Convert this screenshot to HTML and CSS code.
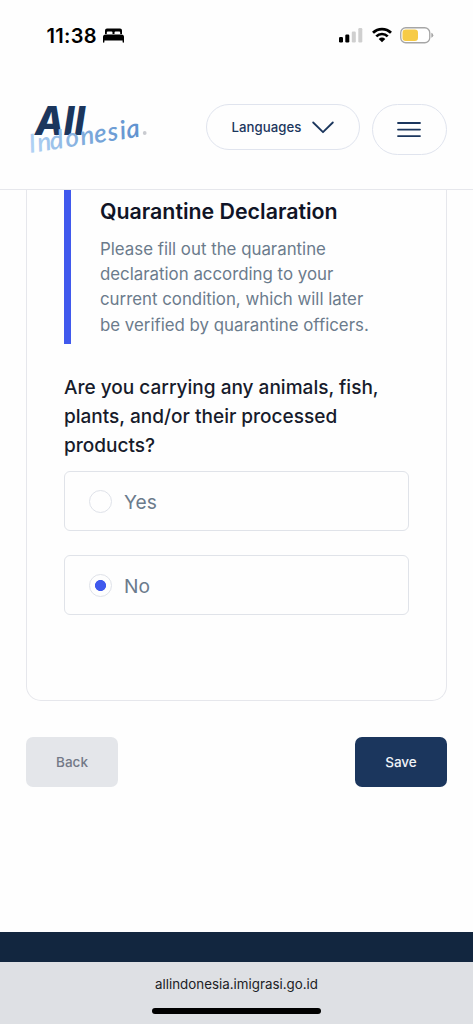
FILE: index.html
```html
<!DOCTYPE html>
<html lang="en">
<head>
<meta charset="utf-8">
<meta name="viewport" content="width=device-width, initial-scale=1">
<title>All Indonesia</title>
<link rel="stylesheet" href="styles.css">
</head>
<body>
<div class="status-bar">
  <div class="clock">
    <span class="time">11:38</span>
    <svg class="bed" width="21" height="15" viewBox="0 0 21 15"><path d="M2 6V2.500Q2 .5 4 .5h13q2 0 2 2V6h-1.800V4.600q0-1-1-1h-3.700q-1 0-1 1V6h-2V4.600q0-1-1-1H4.800q-1 0-1 1V6zM2.500 6.500h16Q21 6.500 21 9v5q0 .7-.7.7t-.7-.7v-1.500H1.400V14q0 .7-.7.7T0 14V9q0-2.500 2.500-2.500z"/></svg>
  </div>
  <div class="indicators">
    <svg width="24" height="16" viewBox="0 0 24 16"><rect x="0" y="10" width="4" height="5.500" rx="1.200"/><rect x="6.300" y="7.500" width="4" height="8" rx="1.200"/><rect x="12.800" y="4.500" width="4" height="11" rx="1.200" fill="#cfcfcf"/><rect x="19.300" y="1" width="4" height="14.500" rx="1.200" fill="#cfcfcf"/></svg>
    <svg width="20" height="16" viewBox="0 0 20 16"><g fill="none" stroke="#000" stroke-width="2.700"><path d="M1 5.800a12.700 12.700 0 0 1 18 0"/><path d="M4.300 9.400a8 8 0 0 1 11.400 0"/></g><path d="M6.700 12q3.300-2.800 6.600 0L10 15.300z"/></svg>
    <svg width="34" height="17" viewBox="0 0 34 17"><rect x=".75" y=".75" width="29" height="15" rx="5" fill="#fff" stroke="#a6a6a6" stroke-width="1.300"/><rect x="2.500" y="2.500" width="15.500" height="11.500" rx="3.200" fill="#f7cb46"/><path d="M31.300 5.800q2 .7 2 2.500t-2 2.500z" fill="#a6a6a6"/></svg>
  </div>
</div>
<header class="header">
  <svg class="logo" width="124" height="56" viewBox="0 0 124 56" role="img" aria-label="All Indonesia">
    <defs><linearGradient id="script-blue" x1="0" x2="1"><stop offset="0" stop-color="#b3d3f5"/><stop offset=".5" stop-color="#7fabdc"/><stop offset="1" stop-color="#5f91cf"/></linearGradient></defs>
    <text class="logo-all" x="9" y="35" textLength="50" lengthAdjust="spacingAndGlyphs">All</text>
    <text class="logo-country" transform="translate(4 53) rotate(-8.500)" x="0 8.500 21 37 52 66 79.500 92 98.500" fill="url(#script-blue)">Indonesia</text>
    <circle cx="118.700" cy="33" r="1.900" fill="#c9cbd0"/>
  </svg>
  <div class="actions">
    <button class="pill languages">Languages
      <svg width="22" height="13" viewBox="0 0 22 13"><path d="M1.200 1.500 11 11.200 20.800 1.500"/></svg>
    </button>
    <button class="pill menu" aria-label="Menu">
      <svg width="24" height="17" viewBox="0 0 24 17"><path d="M1 2h22M1 8.600h22M1 15.100h22"/></svg>
    </button>
  </div>
</header>
<main class="content">
  <section class="card">
    <div class="intro">
      <h1>Quarantine Declaration</h1>
      <p>Please fill out the quarantine<br>declaration according to your<br>current condition, which will later<br>be verified by quarantine officers.</p>
    </div>
    <h2>Are you carrying any animals, fish,<br>plants, and/or their processed<br>products?</h2>
    <div class="options">
      <label class="option"><input type="radio" name="goods"><span>Yes</span></label>
      <label class="option"><input type="radio" name="goods" checked><span>No</span></label>
    </div>
  </section>
  <div class="form-actions">
    <button class="btn back">Back</button>
    <button class="btn save">Save</button>
  </div>
</main>
<div class="footer"></div>
<div class="browser-bar">
  <span class="address">allindonesia.imigrasi.go.id</span>
  <span class="home-indicator"></span>
</div>
</body>
</html>
```
FILE: styles.css
```css
* { box-sizing: border-box; }
body {
  margin: 0;
  height: 1024px;
  display: flex;
  flex-direction: column;
  overflow: hidden;
  background: #fefefe;
  font-family: Inter, "Liberation Sans", sans-serif;
}
button { font: inherit; margin: 0; }
svg { display: block; flex: none; }
.status-bar {
  height: 70px;
  display: flex;
  justify-content: space-between;
  padding: 26px 39px 0 46.5px;
}
.clock { display: flex; gap: 6.5px; height: 20px; }
.time { width: 50px; font-size: 20px; line-height: 20px; font-weight: 600; letter-spacing: 0.3px; white-space: nowrap; }
.bed { margin-top: 2px; }
.indicators { display: flex; gap: 8.5px; padding-top: 1px; }
.header {
  height: 120px;
  flex: none;
  display: flex;
  justify-content: space-between;
  padding: 34px 26.5px 0 26px;
  border-bottom: 1px solid #e6e7ec;
}
.logo { margin-top: -4px; overflow: visible; }
.logo-all { font: italic 800 40px Inter, sans-serif; fill: #1b365d; }
.logo-country { font: italic 600 26px Lato, sans-serif; }
.actions { display: flex; gap: 12px; align-items: flex-start; }
.pill {
  display: flex;
  align-items: center;
  justify-content: center;
  border: 1px solid #e0e4ee;
  background: #fefefe;
  color: #1b365d;
}
.pill path { fill: none; stroke: #1b365d; stroke-width: 1.8; stroke-linecap: round; stroke-linejoin: round; }
.languages { width: 154px; height: 46px; border-radius: 23px; gap: 11px; padding: 0; font-size: 13.2px; font-weight: 500; letter-spacing: 0.05px; }
.menu { width: 74.5px; height: 51px; border-radius: 26px; padding: 0; }
.content { flex: 1; padding: 0 26px; }
.card {
  height: 511px;
  padding: 0 37px;
  border: 1px solid #e6e7ec;
  border-top: 0;
  border-radius: 0 0 15px 15px;
}
.intro { height: 154px; padding: 7px 0 0 29px; border-left: 7px solid #4059ed; }
h1 { margin: 0; font-size: 21.35px; line-height: 28px; font-weight: 600; color: #101426; white-space: nowrap; }
.intro p { margin: 12px 0 0; font-size: 16.83px; line-height: 25.2px; color: #6b7b8c; white-space: nowrap; }
h2 { margin: 29px 0 0; font-size: 19.05px; line-height: 29px; font-weight: 500; color: #171b2b; white-space: nowrap; }
.options { display: grid; gap: 24px; margin-top: 11px; }
.option {
  height: 60px;
  display: flex;
  align-items: center;
  gap: 12px;
  padding-left: 24px;
  border: 1px solid #e0e3e9;
  border-radius: 6px;
  color: #6b7b8c;
  font-size: 19.2px;
}
.option span { padding-top: 1px; }
.option input { appearance: none; width: 23px; height: 23px; margin: 0; border: 1px solid #dfe2e9; border-radius: 50%; background: #fefefe; }
.option input:checked { background: radial-gradient(circle, #4059ed 5.2px, #fefefe 5.9px); }
.form-actions { display: flex; justify-content: space-between; margin-top: 36px; }
.btn { width: 92px; height: 50px; border: 0; border-radius: 7px; padding: 0; font-size: 13.5px; font-weight: 500; }
.back { background: #e4e6ea; color: #737987; }
.save { background: #1b365d; color: #f0f3f8; }
.footer { height: 30px; flex: none; background: #12263f; }
.browser-bar { height: 62px; flex: none; display: flex; flex-direction: column; align-items: center; background: #dee0e4; padding-top: 12px; }
.address { font-size: 13.35px; line-height: 20px; color: #202124; }
.home-indicator { width: 169px; height: 6px; margin-top: 14px; border-radius: 3px; background: #000; }
```
